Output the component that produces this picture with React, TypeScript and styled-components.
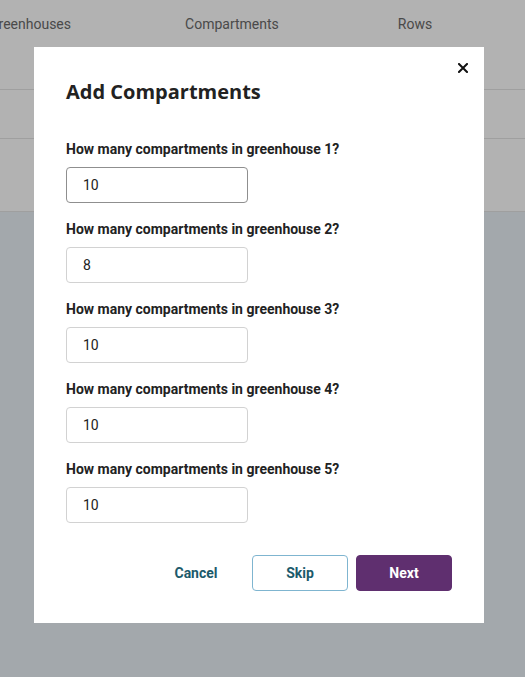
import React from "react";
import styled, { createGlobalStyle } from "styled-components";

const Global = createGlobalStyle`
  html, body { margin: 0; padding: 0; }
  body {
    font-family: Roboto, "Liberation Sans", Arial, sans-serif;
    background: #eaf1f6;
    width: 525px;
    height: 677px;
    overflow: hidden;
  }
  * { box-sizing: border-box; }
`;

const Page = styled.div`
  width: 525px;
  height: 677px;
  display: flex;
  flex-direction: column;
  background: #eaf1f6;
`;

const Header = styled.div`
  background: #ffffff;
  display: flex;
  flex-direction: column;
`;

const Tabs = styled.div`
  height: 90px;
  display: flex;
  align-items: flex-start;
  padding-top: 14px;
  border-bottom: 1px solid #e4e4e4;
  overflow: hidden;
`;

const Tab = styled.div<{ $offset: number }>`
  margin-left: ${(p) => p.$offset}px;
  font-size: 14px;
  line-height: 20px;
  color: #6a6a6a;
  white-space: nowrap;
  flex: none;
`;

const HeaderRow = styled.div<{ $h: number }>`
  height: ${(p) => p.$h}px;
  border-bottom: 1px solid #e4e4e4;
`;

const Overlay = styled.div`
  position: fixed;
  inset: 0;
  background: rgba(0, 0, 0, 0.3);
  padding: 47px 0 0 34px;
`;

const Modal = styled.div`
  position: relative;
  width: 450px;
  background: #ffffff;
  padding: 31px 32px 32px;
  display: flex;
  flex-direction: column;
`;

const Close = styled.button`
  position: absolute;
  top: 14px;
  right: 14px;
  width: 14px;
  height: 14px;
  padding: 0;
  border: none;
  background: transparent;
  display: flex;
  align-items: center;
  justify-content: center;
  cursor: pointer;
`;

const Title = styled.h2`
  margin: 0 0 33px;
  font-family: "Open Sans", "Noto Sans", sans-serif;
  font-weight: 700;
  font-size: 20px;
  line-height: 28px;
  color: #222222;
`;

const Fields = styled.div`
  display: flex;
  flex-direction: column;
  gap: 16px;
`;

const Field = styled.label`
  display: flex;
  flex-direction: column;
  gap: 8px;
`;

const Label = styled.span`
  font-size: 14px;
  line-height: 20px;
  font-weight: 700;
  color: #222222;
`;

const Input = styled.input<{ $active?: boolean }>`
  width: 182px;
  height: 36px;
  padding: 0 16px;
  border: 1px solid ${(p) => (p.$active ? "#8f8f8f" : "#d2d2d2")};
  border-radius: 4px;
  font-family: Roboto, "Liberation Sans", sans-serif;
  font-size: 14px;
  color: #222222;
  background: #ffffff;
  outline: none;
`;

const Actions = styled.div`
  margin-top: 32px;
  display: flex;
  justify-content: flex-end;
  gap: 8px;
`;

const Button = styled.button<{ $variant: "text" | "outline" | "primary" }>`
  width: 96px;
  height: 36px;
  border-radius: 4px;
  font-family: Roboto, "Liberation Sans", sans-serif;
  font-size: 14px;
  font-weight: 700;
  cursor: pointer;
  border: 1px solid
    ${(p) =>
      p.$variant === "outline"
        ? "#7fb5d0"
        : p.$variant === "primary"
        ? "#5f2f6f"
        : "transparent"};
  background: ${(p) => (p.$variant === "primary" ? "#5f2f6f" : "transparent")};
  color: ${(p) => (p.$variant === "primary" ? "#ffffff" : "#1c5a6b")};
`;

const tabs = [
  { label: "Greenhouses", offset: -11 },
  { label: "Compartments", offset: 114 },
  { label: "Rows", offset: 119 },
];

const values = ["10", "8", "10", "10", "10"];

export default function App() {
  return (
    <>
      <Global />
      <Page>
        <Header>
          <Tabs>
            {tabs.map((t) => (
              <Tab key={t.label} $offset={t.offset}>
                {t.label}
              </Tab>
            ))}
          </Tabs>
          <HeaderRow $h={49} />
          <HeaderRow $h={73} />
        </Header>
      </Page>
      <Overlay>
        <Modal role="dialog" aria-label="Add Compartments">
          <Close aria-label="Close">
            <svg width="10" height="10" viewBox="0 0 10 10">
              <path d="M1 1 L9 9 M9 1 L1 9" stroke="#111" strokeWidth="2" strokeLinecap="square" />
            </svg>
          </Close>
          <Title>Add Compartments</Title>
          <Fields>
            {values.map((v, i) => (
              <Field key={i}>
                <Label>How many compartments in greenhouse {i + 1}?</Label>
                <Input $active={i === 0} defaultValue={v} />
              </Field>
            ))}
          </Fields>
          <Actions>
            <Button $variant="text">Cancel</Button>
            <Button $variant="outline">Skip</Button>
            <Button $variant="primary">Next</Button>
          </Actions>
        </Modal>
      </Overlay>
    </>
  );
}
